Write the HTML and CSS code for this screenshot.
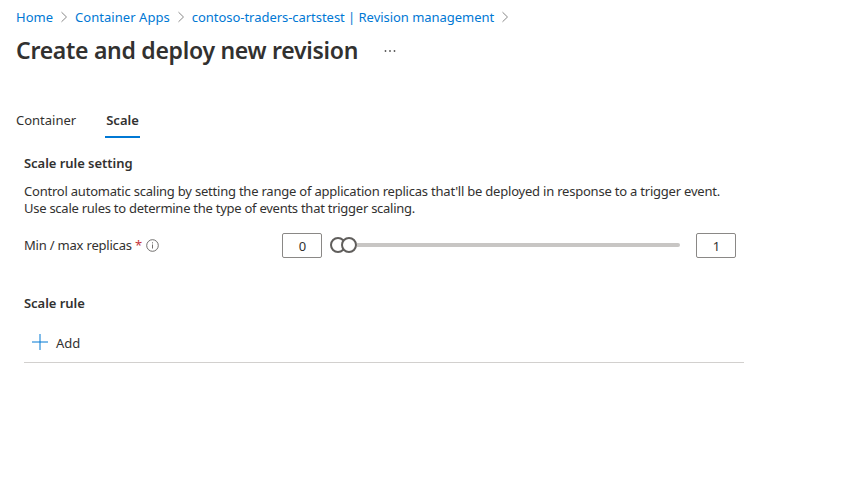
FILE: index.html
```html
<!DOCTYPE html>
<html lang="en">
<head>
<meta charset="utf-8">
<title>Create and deploy new revision</title>
<link rel="stylesheet" href="styles.css">
</head>
<body>
<nav class="crumbs">
<a class="c1">Home</a><svg class="chev" viewBox="0 0 8 12"><path d="M1.5 1.2 6.5 6 1.5 10.8"/></svg>
<a class="c2">Container Apps</a><svg class="chev" viewBox="0 0 8 12"><path d="M1.5 1.2 6.5 6 1.5 10.8"/></svg>
<a class="c3">contoso-traders-cartstest <span class="bar">|</span> Revision management</a><svg class="chev" viewBox="0 0 8 12"><path d="M1.5 1.2 6.5 6 1.5 10.8"/></svg>
</nav>
<header class="head"><h1>Create and deploy new revision</h1><svg class="more" viewBox="0 0 12 4"><circle cx="1.5" cy="2" r=".9"/><circle cx="6" cy="2" r=".9"/><circle cx="10.5" cy="2" r=".9"/></svg></header>
<div class="tabs"><span class="tab">Container</span><span class="tab active">Scale</span></div>
<main>
<h2>Scale rule setting</h2>
<p><span class="l1">Control automatic scaling by setting the range of application replicas that'll be deployed in response to a trigger event.</span><br><span class="l2">Use scale rules to determine the type of events that trigger scaling.</span></p>
<div class="replicas">
<div class="label"><span>Min / max replicas <b>*</b></span><svg class="info" viewBox="0 0 13 13"><circle cx="6.5" cy="6.5" r="5.8"/><path d="M6.5 5.5v4M6.5 3.3v1.1"/></svg></div>
<div class="box">0</div>
<div class="slider"><i></i><i></i><span></span></div>
<div class="box">1</div>
</div>
<h2 class="rule">Scale rule</h2>
<div class="toolbar"><svg viewBox="0 0 16 16"><path d="M8 0v16M0 8h16"/></svg><span>Add</span></div>
</main>
</body>
</html>
```
FILE: styles.css
```css
* { box-sizing: border-box; }
body { margin: 0; padding: 7px 16px; height: 486px; background: #fff; color: #323130; font: 13px/18px "Noto Sans", sans-serif; overflow: hidden; }
.crumbs { display: flex; align-items: center; height: 20px; color: #0078d4; white-space: nowrap; }
.c2 { letter-spacing: 0.05px; }
.c3 { letter-spacing: -0.04px; }
.chev { width: 8px; height: 12px; margin: 0 7px; fill: none; stroke: #888; }
.head { display: flex; align-items: center; height: 34px; margin-top: 6px; }
h1 { width: 342px; margin: 0; font-size: 23px; line-height: 34px; font-weight: 600; letter-spacing: -0.28px; white-space: nowrap; }
.more { width: 12px; height: 4px; margin: 1px 0 0 26px; fill: #555; }
.tabs { display: flex; gap: 29px; height: 32px; margin-top: 39px; line-height: 29px; }
.active { width: 35px; padding-left: 1px; border-bottom: 2px solid #0078d4; font-weight: 600; }
main { padding: 16px 0 0 8px; width: 728px; }
h2 { margin: 0; font-size: 13px; line-height: 18px; font-weight: 600; letter-spacing: -0.04px; }
p { margin: 11px 0 0; line-height: 17px; white-space: nowrap; }
.l1 { letter-spacing: -0.215px; }
.l2 { letter-spacing: -0.26px; }
.replicas { display: flex; align-items: center; height: 26px; margin-top: 15px; }
.label { display: flex; align-items: center; width: 258px; gap: 4px; white-space: nowrap; letter-spacing: -0.2px; }
.label b { color: #c4363c; font-weight: 400; }
.info { width: 13px; height: 13px; margin-top: 1px; fill: none; stroke: #605e5c; stroke-width: 0.9; }
.box { width: 40px; height: 25px; border: 1px solid #8a8886; border-radius: 2px; padding-left: 1px; line-height: 25px; text-align: center; }
.slider { display: flex; align-items: center; width: 350px; margin: 0 16px 0 8px; }
.slider i { width: 16px; height: 16px; flex: none; border: 2px solid #605e5c; border-radius: 50%; background: #fff; }
.slider i + i { margin-left: -5px; }
.slider span { flex: 1; height: 4px; border-radius: 0 2px 2px 0; background: #c8c6c4; }
.rule { margin-top: 36px; }
.toolbar { display: flex; align-items: center; width: 720px; height: 39px; margin-top: 12px; padding-left: 8px; gap: 8px; border-bottom: 1px solid #d2d0ce; }
.toolbar svg { width: 16px; height: 16px; margin-top: -2px; stroke: #0078d4; }
```
